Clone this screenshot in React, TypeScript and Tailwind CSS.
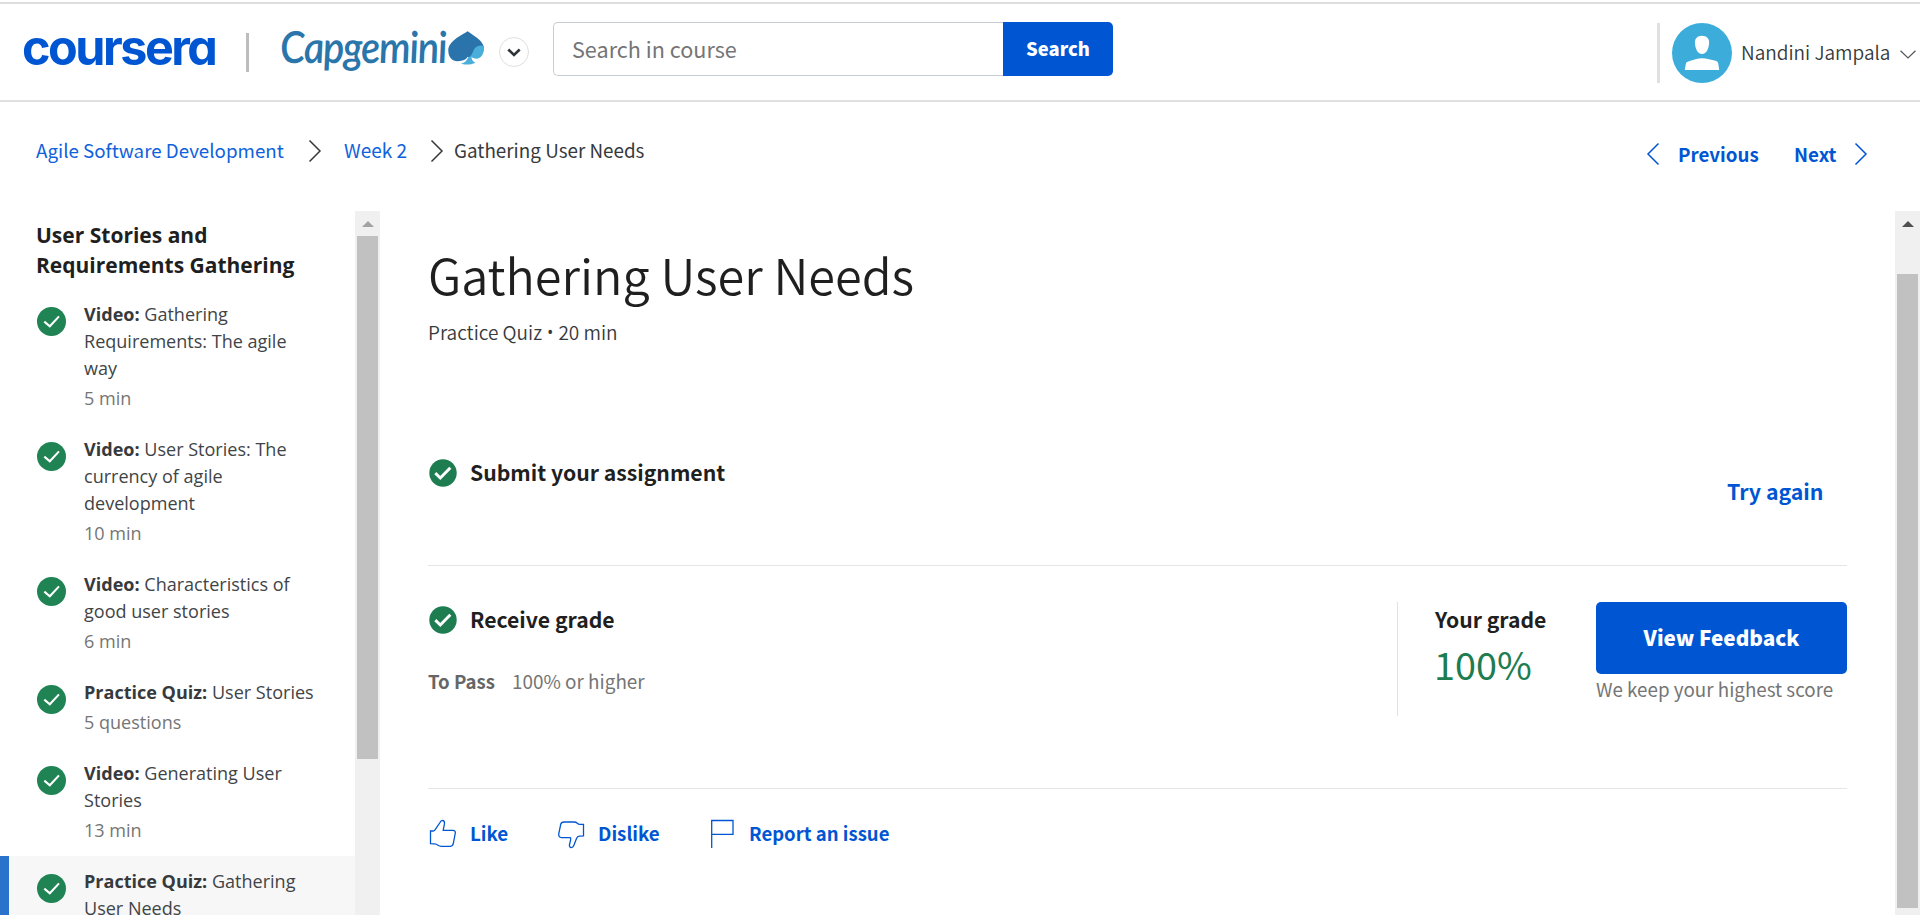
import type { ReactNode } from "react";

type Lesson = { kind: string; title: string; meta?: string; active?: boolean };

const lessons: Lesson[] = [
  { kind: "Video:", title: "Gathering Requirements: The agile way", meta: "5 min" },
  { kind: "Video:", title: "User Stories: The currency of agile development", meta: "10 min" },
  { kind: "Video:", title: "Characteristics of good user stories", meta: "6 min" },
  { kind: "Practice Quiz:", title: "User Stories", meta: "5 questions" },
  { kind: "Video:", title: "Generating User Stories", meta: "13 min" },
  { kind: "Practice Quiz:", title: "Gathering User Needs", active: true },
];

function Chevron({ dir, className }: { dir: "left" | "right"; className: string }) {
  return (
    <svg viewBox="0 0 14 24" className={className} fill="none" stroke="currentColor" strokeWidth="1.5">
      <path d={dir === "right" ? "M1.5 1.5 12 12 1.5 22.5" : "M12.5 1.5 2 12 12.5 22.5"} />
    </svg>
  );
}

function LessonCheck() {
  return (
    <svg viewBox="0 0 29 29" className="mt-[6px] size-[29px] shrink-0" fill="none">
      <circle cx="14.5" cy="14.5" r="14.5" fill="#1f8354" />
      <path d="M7.3 14.6 12.8 19.2 22 9.4" stroke="#fff" strokeWidth="2.1" />
    </svg>
  );
}

function StepCheck() {
  return (
    <svg viewBox="0 0 28 28" className="mt-[2px] ml-px size-[28px] shrink-0" fill="none">
      <circle cx="14" cy="14" r="13.7" fill="#1d7c50" />
      <path d="M6.3 14.2 11.3 19 21.3 8.8" stroke="#fff" strokeWidth="3" />
    </svg>
  );
}

function ScrollArrow({ className }: { className: string }) {
  return (
    <svg viewBox="0 0 12 6" className={className}>
      <path d="M0 6 6 0 12 6Z" fill="currentColor" />
    </svg>
  );
}

function Header() {
  return (
    <header className="flex h-[102px] items-start border-b-2 border-[#e0e0e0] pt-[2px]">
      <div className="flex h-[98px] w-full items-start border-t-2 border-[#dddddd]">
        <div className="mt-[14px] ml-[22px] w-[224px] font-['Inter'] text-[48.5px] leading-[60px] font-bold tracking-[-2.5px] text-[#0056d2] [font-feature-settings:'cv11']">
          coursera
        </div>
        <div className="mt-[29px] h-[39px] w-[3px] bg-[#bdbdbd]" />
        <div className="mt-[12px] ml-[31px] w-[168px] origin-left scale-x-[0.91] skew-x-[4deg] font-['Lato'] text-[44px] leading-[60px] font-semibold tracking-[-1.4px] whitespace-nowrap text-[#2a76ab] italic">
          Capgemini
        </div>
        <svg viewBox="0 0 36 34" className="mt-[27px] h-[34px] w-[36px] shrink-0">
          <path d="M19.7.2C13 4.5.3 10 .3 19.5.3 27 5 30.5 10 30.2 15 30 18 28.5 19.5 26L30 26C34 24 36 20 36 16.5 34.5 8.5 25 4.5 19.7.2Z" fill="#2a73ab" />
          <path d="M20 26.5C24.5 25 24.5 20 27 17 29 14.5 33 13.8 35.7 15 36.8 20 34.5 27.5 29 27.7 26.5 27.7 25 27 23.5 26 23.5 28.5 25 30.8 27.5 31.8 23 34 16 34 13 32.8 17 31.8 19 29.5 20 26.5Z" fill="#49aeda" />
        </svg>
        <div className="mt-[33px] ml-[15px] flex size-[30px] items-center justify-center rounded-full border border-[#dfdfdf]">
          <svg viewBox="0 0 14 9" className="h-[9px] w-[14px]" fill="none">
            <path d="M1.3 1.5 7 7 12.7 1.5" stroke="#2f3439" strokeWidth="2.6" />
          </svg>
        </div>
        <div className="mt-[18px] ml-[24px] flex h-[54px] w-[560px]">
          <div className="flex-1 rounded-l-[5px] border border-r-0 border-[#c7ccd3] pl-[18px] text-[21.6px] leading-[52px] text-[#757575]">
            Search in course
          </div>
          <button className="w-[110px] rounded-r-[5px] bg-[#0056d2] text-[18.4px] font-extrabold text-white">
            Search
          </button>
        </div>
        <div className="mt-[19px] ml-auto h-[60px] w-[3px] bg-[#e0e0e0]" />
        <svg viewBox="0 0 60 60" className="mt-[19px] ml-[12px] size-[60px] shrink-0">
          <circle cx="30" cy="30" r="30" fill="#3caddb" />
          <path d="M30 12.7C34.5 12.7 37.2 15.5 37.1 19.5 36.9 25.5 34.5 31 30 31 25.5 31 23.1 25.5 22.9 19.5 22.8 15.5 25.5 12.7 30 12.7Z" fill="#fff" />
          <path d="M12.8 47 13.7 41.5C14 39.5 15 38.7 17 38.2 21 37 26 35.2 30 35.2 34 35.2 40 36.8 43.5 37.8 45.5 38.4 46.2 39.5 46.4 41.5L47.2 47Z" fill="#fff" />
        </svg>
        <div className="mt-[33px] ml-[9px] w-[159px] text-[19px] leading-[30px] font-[350] whitespace-nowrap text-[#373a3c]">
          Nandini Jampala
        </div>
        <svg viewBox="0 0 16 9" className="mt-[46px] mr-[4px] h-[9px] w-[16px] shrink-0" fill="none">
          <path d="M.5.8 8 8 15.5.8" stroke="#55585a" strokeWidth="1.2" />
        </svg>
      </div>
    </header>
  );
}

function Breadcrumbs() {
  return (
    <div className="flex h-[109px] items-start text-[18.75px] leading-[30px] whitespace-nowrap">
      <a className="mt-[33px] ml-[36px] w-[272px] text-[#0f62dc]">Agile Software Development</a>
      <Chevron dir="right" className="mt-[37px] h-[24px] w-[14px] text-[#373a3c]" />
      <a className="mt-[33px] ml-[22px] w-[86px] text-[19px] text-[#0f62dc]">Week 2</a>
      <Chevron dir="right" className="mt-[37px] h-[24px] w-[14px] text-[#373a3c]" />
      <span className="mt-[33px] ml-[10px] text-[18.85px] text-[#373a3c]">Gathering User Needs</span>
      <div className="mt-[40px] mr-[52px] ml-auto flex items-start text-[18.75px] leading-[23px] font-bold text-[#0056d2]">
        <Chevron dir="left" className="h-[24px] w-[14px]" />
        <a className="ml-[18px] w-[116px]">Previous</a>
        <a className="w-[60px]">Next</a>
        <Chevron dir="right" className="h-[24px] w-[14px]" />
      </div>
    </div>
  );
}

function Sidebar() {
  return (
    <aside className="flex w-[380px] shrink-0 font-['Open_Sans']">
      <div className="w-[355px]">
        <h2 className="mt-[9px] mb-[9px] ml-[36px] text-[21px] leading-[30px] font-bold text-[#1f1f1f]">
          User Stories and
          <br />
          Requirements Gathering
        </h2>
        {lessons.map((lesson) => (
          <div
            key={lesson.kind + lesson.title}
            className={
              lesson.active
                ? "flex h-[108px] border-l-[9px] border-[#2a73cc] bg-[#f7f7f7] py-[12px] pl-[27.5px]"
                : "flex py-[12px] pl-[36.5px]"
            }
          >
            <LessonCheck />
            <div className="ml-[18.5px] w-[232px] text-[18.05px] leading-[27px]">
              <p className="text-[#414447]">
                <b className="text-[#373a3c]">{lesson.kind}</b> {lesson.title}
              </p>
              {lesson.meta && <p className="mt-[3px] text-[#757575]">{lesson.meta}</p>}
            </div>
          </div>
        ))}
      </div>
      <div className="flex w-[25px] flex-col items-center bg-[#f0f0f0] pt-[10px]">
        <ScrollArrow className="mb-[9px] h-[6px] w-[12px] text-[#a3a3a3]" />
        <div className="h-[523px] w-[21px] bg-[#c1c1c1]" />
      </div>
    </aside>
  );
}

function StepTitle({ children }: { children: ReactNode }) {
  return (
    <div className="flex items-start">
      <StepCheck />
      <h3 className="ml-[13px] text-[21.2px] leading-[30px] font-bold text-[#1f1f1f]">{children}</h3>
    </div>
  );
}

function Feedback() {
  return (
    <div className="mt-[29px] flex text-[18.8px] leading-[30px] font-bold text-[#0056d2]">
      <a className="flex w-[128px]">
        <svg viewBox="0 0 30 32" className="h-[32px] w-[30px]" fill="none" stroke="currentColor" strokeWidth="1.3">
          <path d="M2.5 13H5Q6.3 12.9 7 11.8L12 4.5Q12.9 2.3 14.3 2.3 16.7 2.5 16.5 5.5L15.2 12.3H25Q27.6 12.5 27.3 15L25.2 26Q24.7 28.2 22.5 28.3H13.5Q11.5 28.2 10 27.3 8.5 26 6.5 25.9L2.5 25.7Z" />
        </svg>
        <span className="ml-[12px]">Like</span>
      </a>
      <a className="flex w-[152px]">
        <svg viewBox="0 0 30 32" className="h-[32px] w-[30px]" fill="none" stroke="currentColor" strokeWidth="1.3">
          <path d="M27.5 6.3H24Q22.3 6.2 21.3 5.2 20 4 18 4H8Q5.3 4 4.7 6.3L2.7 16Q2.5 19.5 5.5 19.6H14.3Q15 20.5 14.6 22L13.4 27Q13.3 29.6 15.3 29.6 17 29.5 17.8 27.5L20.5 20.5Q21.3 18.3 23.5 18.2L27.5 18Z" />
        </svg>
        <span className="ml-[12px]">Dislike</span>
      </a>
      <a className="flex">
        <svg viewBox="0 0 30 32" className="h-[32px] w-[30px]" fill="none" stroke="currentColor" strokeWidth="1.3">
          <path d="M3.7 30V2.5H25V16.4H3.7" />
        </svg>
        <span className="ml-[11px] text-[18.55px]">Report an issue</span>
      </a>
    </div>
  );
}

function Content() {
  return (
    <main className="min-w-0 flex-1 px-[48px]">
      <h1 className="mt-[33px] text-[48.6px] leading-[60px] font-[350] text-[#1f1f1f]">Gathering User Needs</h1>
      <p className="mt-[13px] h-[30px] text-[19px] leading-[30px] font-[350] text-[#373a3c]">
        Practice Quiz <span className="font-['Noto_Sans'] text-[21px] leading-none">•</span> 20 min
      </p>

      <section className="mt-[110px] flex h-[109px] justify-between border-b border-[#e5e5e5]">
        <StepTitle>Submit your assignment</StepTitle>
        <a className="mt-[18.5px] mr-[23.5px] text-[21.3px] leading-[30px] font-bold text-[#0056d2]">Try again</a>
      </section>

      <section className="flex h-[223px] border-b border-[#e5e5e5] pt-[36px]">
        <div className="flex-1 pt-[2px]">
          <StepTitle>Receive grade</StepTitle>
          <p className="mt-[32px] flex text-[18.9px] leading-[30px] text-[#757575]">
            <b className="w-[84px] text-[18.6px] text-[#666666]">To Pass</b>
            100% or higher
          </p>
        </div>
        <div className="h-[114px] w-[199px] border-l border-[#e1e1e1] pt-[2px] pl-[37px]">
          <h3 className="text-[21.15px] leading-[30px] font-bold text-[#1f1f1f]">Your grade</h3>
          <p className="mt-[6px] -ml-px text-[37.8px] leading-[48px] text-[#1d7c50]">100%</p>
        </div>
        <div className="w-[251px]">
          <button className="h-[72px] w-full rounded-[5px] bg-[#0056d2] pb-px text-[20.7px] font-extrabold text-white">
            View Feedback
          </button>
          <p className="text-[18.8px] leading-[30px] whitespace-nowrap text-[#757575]">We keep your highest score</p>
        </div>
      </section>
      <Feedback />
    </main>
  );
}

export default function App() {
  return (
    <div className="flex h-[915px] w-[1920px] flex-col overflow-hidden bg-white font-['Noto_Sans_CJK_SC',sans-serif]">
      <Header />
      <Breadcrumbs />
      <div className="flex min-h-0 flex-1 overflow-hidden">
        <Sidebar />
        <Content />
        <div className="flex w-[25px] shrink-0 flex-col items-center bg-[#f0f0f0] pt-[10px]">
          <ScrollArrow className="mb-[47px] h-[6px] w-[12px] text-[#505050]" />
          <div className="h-[634px] w-[21px] bg-[#c1c1c1]" />
        </div>
      </div>
    </div>
  );
}
